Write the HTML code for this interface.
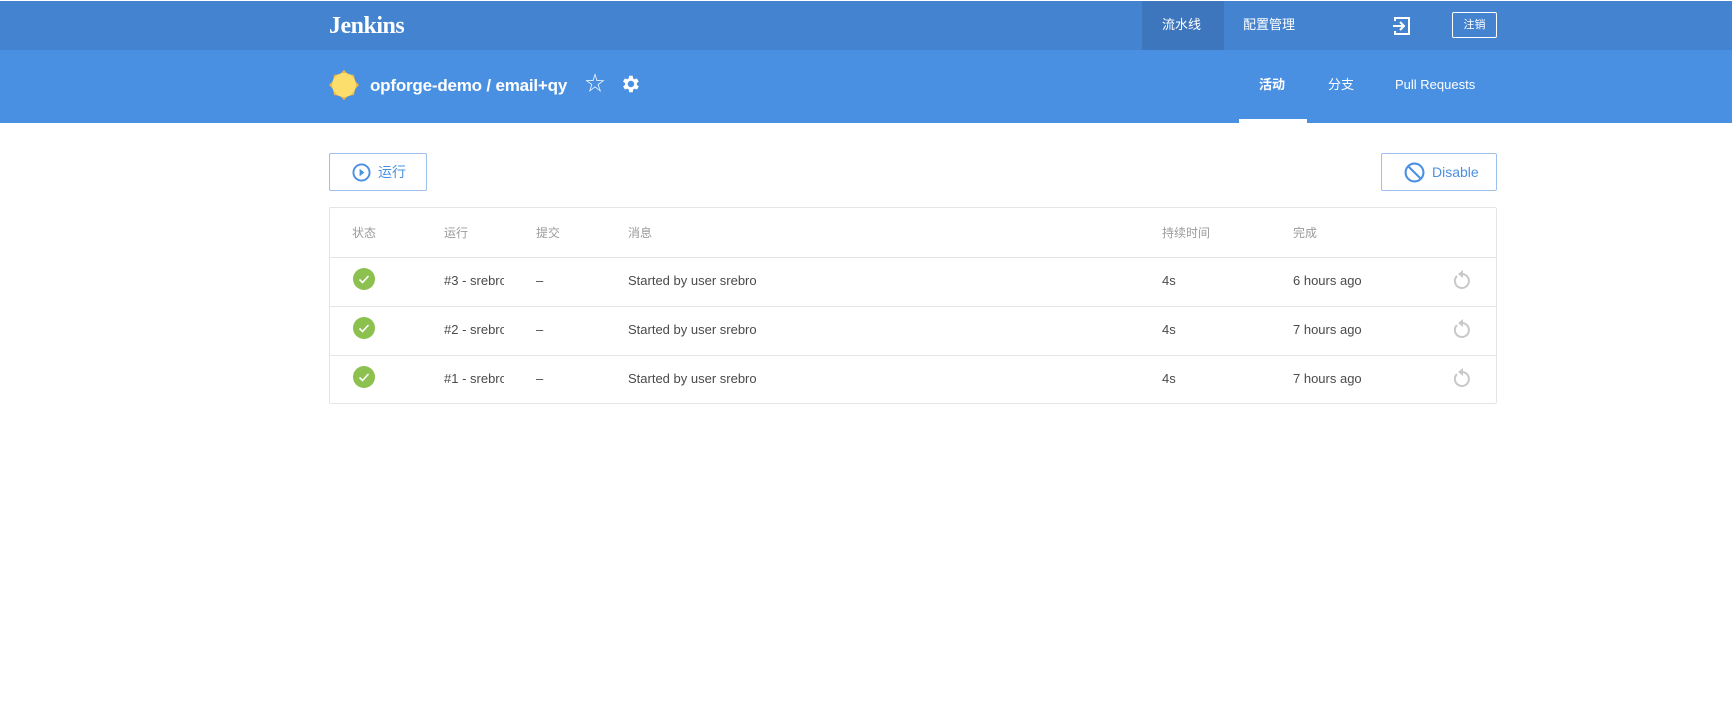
<!DOCTYPE html>
<html><head><meta charset="utf-8"><style>
*{box-sizing:border-box;margin:0;padding:0}
body{width:1732px;height:707px;background:#fff;font-family:"Liberation Sans","Noto Sans CJK SC",sans-serif;color:#4a4a4a;position:relative;overflow:hidden}
.top{position:absolute;left:0;top:1px;width:1732px;height:49px;background:#4383d0}
.sub{position:absolute;left:0;top:50px;width:1732px;height:73px;background:#4a90e2}
.abs{position:absolute;line-height:18px}
.w{color:#fff}
.th{font-size:12px;color:#9b9b9b}
.td{font-size:13px;color:#4a4a4a}
.btn{position:absolute;border:1px solid #9cc1ee;border-radius:2px;height:38px;top:153px;color:#4a90e2;font-size:14px}
.row{position:absolute;left:329px;width:1168px;border-top:1px solid #e5e5e5}
</style></head><body>
<div class="top"></div>
<div class="abs w" style="left:329px;top:12px;line-height:28px;font-family:'Liberation Serif',serif;font-weight:bold;font-size:24px;letter-spacing:-0.5px">Jenkins</div>
<div class="abs" style="left:1142px;top:1px;width:82px;height:49px;background:#3d76bd"></div>
<div class="abs w" style="left:1162px;top:16px;font-size:13px">流水线</div>
<div class="abs w" style="left:1243px;top:16px;font-size:13px">配置管理</div>
<svg class="abs" style="left:1392px;top:16px" width="20" height="20" viewBox="0 0 20 20"><path d="M3 5V2h14v16H3v-3" fill="none" stroke="#fff" stroke-width="2"/><path d="M1 10h10M8 6l4 4-4 4" fill="none" stroke="#fff" stroke-width="2"/></svg>
<div class="abs w" style="left:1452px;top:12px;width:45px;height:26px;border:1px solid #fff;border-radius:2px;font-size:11px;text-align:center;line-height:24px">注销</div>
<div class="sub"></div>
<svg class="abs" style="left:328px;top:69px" width="32" height="32" viewBox="0 0 32 32"><polygon points="16,1 20,5 26,6 27,12 31,16 27,20 26,26 20,27 16,31 12,27 6,26 5,20 1,16 5,12 6,6 12,5" fill="#f3b53b"/><circle cx="16" cy="16" r="12" fill="#fbde6c"/></svg>
<div class="abs w" style="left:370px;top:75px;line-height:22px;font-size:17px;font-weight:bold;letter-spacing:-0.2px">opforge-demo / email+qy</div>
<div class="abs w" style="left:585px;top:72px;line-height:24px;font-size:20px">☆</div>
<svg class="abs" style="left:619px;top:73px" width="22" height="22" viewBox="0 0 24 24"><path fill="#fff" d="M19.4 13a7.5 7.5 0 0 0 0-2l2.1-1.6-2-3.5-2.5 1a7.4 7.4 0 0 0-1.7-1L15 3h-4l-.4 2.9a7.4 7.4 0 0 0-1.7 1l-2.5-1-2 3.5L6.6 11a7.5 7.5 0 0 0 0 2l-2.1 1.6 2 3.5 2.5-1a7.4 7.4 0 0 0 1.7 1L11 21h4l.4-2.9a7.4 7.4 0 0 0 1.7-1l2.5 1 2-3.5zM13 15.5a3.5 3.5 0 1 1 0-7 3.5 3.5 0 0 1 0 7z"/></svg>
<div class="abs w" style="left:1259px;top:76px;font-size:13px;font-weight:bold">活动</div>
<div class="abs" style="left:1239px;top:119px;width:68px;height:4px;background:#fff"></div>
<div class="abs w" style="left:1328px;top:76px;font-size:13px">分支</div>
<div class="abs w" style="left:1395px;top:76px;font-size:13px">Pull Requests</div>
<div class="btn" style="left:329px;width:98px"><svg class="abs" style="left:22px;top:9px" width="19" height="19" viewBox="0 0 20 20"><circle cx="10" cy="10" r="8.5" fill="none" stroke="#4a90e2" stroke-width="2"/><path d="M8 6v8l5-4z" fill="#4a90e2"/></svg><span class="abs" style="left:48px;top:9px">运行</span></div>
<div class="btn" style="left:1381px;width:116px"><svg class="abs" style="left:22px;top:8px" width="21" height="21" viewBox="0 0 20 20"><circle cx="10" cy="10" r="8.5" fill="none" stroke="#4a90e2" stroke-width="2"/><path d="M4 4l12 12" stroke="#4a90e2" stroke-width="2"/></svg><span class="abs" style="left:50px;top:9px">Disable</span></div>
<div class="abs" style="left:329px;top:207px;width:1168px;height:197px;border:1px solid #e5e5e5;border-radius:2px"></div>
<div class="abs th" style="left:352px;top:224px">状态</div>
<div class="abs th" style="left:444px;top:224px">运行</div>
<div class="abs th" style="left:536px;top:224px">提交</div>
<div class="abs th" style="left:628px;top:224px">消息</div>
<div class="abs th" style="left:1162px;top:224px">持续时间</div>
<div class="abs th" style="left:1293px;top:224px">完成</div>
<div class="row" style="top:257px;height:49px"></div>
<div class="row" style="top:306px;height:49px"></div>
<div class="row" style="top:355px;height:49px"></div>
<div class="abs" style="left:0;top:257px">
 <svg class="abs" style="left:353px;top:11px" width="22" height="22"><circle cx="11" cy="11" r="11" fill="#8cc04f"/><path d="M6.5 11.5l3 3 6-6.5" fill="none" stroke="#fff" stroke-width="1.6"/></svg>
 <div class="abs td" style="left:444px;top:15px;width:60px;overflow:hidden;white-space:nowrap">#3 - srebro</div>
 <div class="abs td" style="left:536px;top:15px">–</div>
 <div class="abs td" style="left:628px;top:15px;white-space:nowrap">Started by user srebro</div>
 <div class="abs td" style="left:1162px;top:15px">4s</div>
 <div class="abs td" style="left:1293px;top:15px;white-space:nowrap">6 hours ago</div>
 <svg class="abs" style="left:1451px;top:12px" width="22" height="22" viewBox="0 0 22 22"><path d="M11 5A7 7 0 1 1 6 7" fill="none" stroke="#c8c8c8" stroke-width="2"/><path d="M12 1v8l-5-4z" fill="#c8c8c8"/></svg>
</div>
<div class="abs" style="left:0;top:306px">
 <svg class="abs" style="left:353px;top:11px" width="22" height="22"><circle cx="11" cy="11" r="11" fill="#8cc04f"/><path d="M6.5 11.5l3 3 6-6.5" fill="none" stroke="#fff" stroke-width="1.6"/></svg>
 <div class="abs td" style="left:444px;top:15px;width:60px;overflow:hidden;white-space:nowrap">#2 - srebro</div>
 <div class="abs td" style="left:536px;top:15px">–</div>
 <div class="abs td" style="left:628px;top:15px;white-space:nowrap">Started by user srebro</div>
 <div class="abs td" style="left:1162px;top:15px">4s</div>
 <div class="abs td" style="left:1293px;top:15px;white-space:nowrap">7 hours ago</div>
 <svg class="abs" style="left:1451px;top:12px" width="22" height="22" viewBox="0 0 22 22"><path d="M11 5A7 7 0 1 1 6 7" fill="none" stroke="#c8c8c8" stroke-width="2"/><path d="M12 1v8l-5-4z" fill="#c8c8c8"/></svg>
</div>
<div class="abs" style="left:0;top:355px">
 <svg class="abs" style="left:353px;top:11px" width="22" height="22"><circle cx="11" cy="11" r="11" fill="#8cc04f"/><path d="M6.5 11.5l3 3 6-6.5" fill="none" stroke="#fff" stroke-width="1.6"/></svg>
 <div class="abs td" style="left:444px;top:15px;width:60px;overflow:hidden;white-space:nowrap">#1 - srebro</div>
 <div class="abs td" style="left:536px;top:15px">–</div>
 <div class="abs td" style="left:628px;top:15px;white-space:nowrap">Started by user srebro</div>
 <div class="abs td" style="left:1162px;top:15px">4s</div>
 <div class="abs td" style="left:1293px;top:15px;white-space:nowrap">7 hours ago</div>
 <svg class="abs" style="left:1451px;top:12px" width="22" height="22" viewBox="0 0 22 22"><path d="M11 5A7 7 0 1 1 6 7" fill="none" stroke="#c8c8c8" stroke-width="2"/><path d="M12 1v8l-5-4z" fill="#c8c8c8"/></svg>
</div>
</body></html>
